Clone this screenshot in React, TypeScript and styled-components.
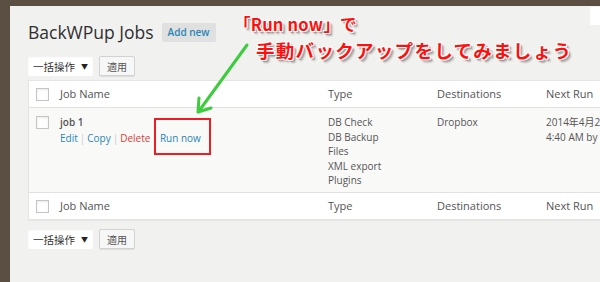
import React from "react";
import styled, { createGlobalStyle } from "styled-components";

const Global = createGlobalStyle`
  html, body { margin: 0; padding: 0; }
  body { width: 600px; height: 282px; overflow: hidden; background: #5b4f44; }
`;

const Frame = styled.div`
  position: relative;
  width: 600px;
  height: 282px;
  box-sizing: border-box;
  padding: 6px 0 0 10px;
  background: #5b4f44;
  overflow: hidden;
`;

const Page = styled.div`
  position: relative;
  height: 276px;
  background: #f1f1f0;
  padding: 16px 0 0 18px;
  box-sizing: border-box;
  overflow: hidden;
  font-family: "Open Sans", "Noto Sans CJK JP", sans-serif;
  color: #555;
`;

const ScreenTab = styled.div`
  position: absolute;
  top: 1px;
  right: 0;
  width: 10px;
  height: 18px;
  background: #fff;
`;

const TitleRow = styled.div`
  display: flex;
  align-items: center;
  gap: 8px;
  height: 20px;
  margin-bottom: 14px;
`;

const Title = styled.h2`
  margin: 0;
  font-size: 17.5px;
  font-weight: 400;
  color: #2f2f2f;
  line-height: 20px;
`;

const AddNew = styled.span`
  display: inline-flex;
  align-items: center;
  height: 19px;
  padding: 0 6px;
  background: #e0e0e0;
  border-radius: 2px;
  color: #2a86b5;
  font-size: 10px;
  font-weight: 600;
`;

const Bulk = styled.div<{ $bottom?: boolean }>`
  display: flex;
  gap: 6px;
  height: 20px;
  margin: ${(p) => (p.$bottom ? "9px 0 0" : "0 0 4px")};
`;

const Select = styled.div`
  display: flex;
  align-items: center;
  justify-content: space-between;
  width: 65px;
  box-sizing: border-box;
  padding: 0 5px 0 5px;
  background: #fff;
  font-size: 10.5px;
  color: #333;
  box-shadow: inset 0 1px 2px rgba(0, 0, 0, 0.07);
`;

const Caret = styled.span`
  font-size: 7px;
  color: #222;
`;

const Apply = styled.div`
  display: flex;
  align-items: center;
  justify-content: center;
  width: 36px;
  box-sizing: border-box;
  background: #f7f7f7;
  border: 1px solid #d2d2d2;
  border-radius: 2px;
  font-size: 10px;
  color: #555;
  box-shadow: 0 1px 0 #ddd;
`;

const Table = styled.div`
  width: 640px;
  background: #fff;
  border: 1px solid #e5e5e5;
  box-shadow: 0 1px 1px rgba(0, 0, 0, 0.04);
`;

const Row = styled.div<{ $body?: boolean }>`
  display: grid;
  grid-template-columns: 31px 268px 109px 109px 1fr;
  align-items: ${(p) => (p.$body ? "start" : "center")};
  height: ${(p) => (p.$body ? "86px" : "26px")};
  box-sizing: border-box;
  padding-top: ${(p) => (p.$body ? "7px" : "0")};
  background: ${(p) => (p.$body ? "#f9f9f8" : "#fff")};
  border-top: ${(p) => (p.$body ? "1px solid #e1e1e1" : "none")};
  border-bottom: ${(p) => (p.$body ? "1px solid #e1e1e1" : "none")};
  font-size: 10px;
  line-height: 14.5px;
`;

const Check = styled.span<{ $body?: boolean }>`
  display: block;
  width: 13px;
  height: 13px;
  margin: ${(p) => (p.$body ? "1px 0 0 7px" : "0 0 0 7px")};
  box-sizing: border-box;
  border: 1px solid #c4c4c4;
  background: #fefefe;
  box-shadow: inset 0 1px 2px rgba(0, 0, 0, 0.08);
`;

const HeadCell = styled.span`
  color: #555;
  font-size: 11px;
`;

const Cell = styled.div`
  display: flex;
  flex-direction: column;
  white-space: nowrap;
  color: #555;
`;

const JobName = styled.span`
  font-weight: 600;
  color: #555;
  margin-bottom: 1.5px;
`;

const Actions = styled.div`
  display: flex;
  align-items: center;
`;

const Link = styled.span<{ $danger?: boolean }>`
  color: ${(p) => (p.$danger ? "#dd3d36" : "#2a86b5")};
`;

const Sep = styled.span`
  color: #ccc;
  margin: 0 2px;
`;

const RedBox = styled.div`
  position: absolute;
  left: 144px;
  top: 112px;
  width: 57px;
  height: 37px;
  box-sizing: border-box;
  border: 2px solid #ee1c24;
`;

const Note = styled.div`
  position: absolute;
  font-family: "Noto Sans CJK JP", sans-serif;
  font-weight: 700;
  color: #ff1010;
  white-space: nowrap;
  text-shadow: -1px -1px 0 #fff, 1px -1px 0 #fff, -1px 1px 0 #fff, 1px 1px 0 #fff,
    2px 2px 1px #9a9a9a, 3px 3px 2px #b0b0b0;
`;

const Line1 = styled(Note)`
  left: 224px;
  top: 7px;
  font-size: 16.5px;
  line-height: 22px;
  letter-spacing: 0.2px;
`;

const Line2 = styled(Note)`
  left: 246px;
  top: 31px;
  font-size: 18.5px;
  line-height: 26px;
  letter-spacing: 1.3px;
`;

const Arrow = styled.svg`
  position: absolute;
  left: 0;
  top: 0;
  overflow: visible;
`;

const types = ["DB Check", "DB Backup", "Files", "XML export", "Plugins"];

function HeaderRow() {
  return (
    <Row>
      <Check />
      <HeadCell>Job Name</HeadCell>
      <HeadCell>Type</HeadCell>
      <HeadCell>Destinations</HeadCell>
      <HeadCell>Next Run</HeadCell>
    </Row>
  );
}

export default function App() {
  return (
    <>
      <Global />
      <Frame>
        <Page>
          <ScreenTab />
          <TitleRow>
            <Title>BackWPup Jobs</Title>
            <AddNew>Add new</AddNew>
          </TitleRow>
          <Bulk>
            <Select>
              一括操作 <Caret>▼</Caret>
            </Select>
            <Apply>適用</Apply>
          </Bulk>
          <Table>
            <HeaderRow />
            <Row $body>
              <Check $body />
              <Cell>
                <JobName>job 1</JobName>
                <Actions>
                  <Link>Edit</Link>
                  <Sep>|</Sep>
                  <Link>Copy</Link>
                  <Sep>|</Sep>
                  <Link $danger>Delete</Link>
                  <Sep>|</Sep>
                  <Link>Run now</Link>
                </Actions>
              </Cell>
              <Cell>
                {types.map((t) => (
                  <span key={t}>{t}</span>
                ))}
              </Cell>
              <Cell>
                <span>Dropbox</span>
              </Cell>
              <Cell>
                <span>2014年4月29日</span>
                <span>4:40 AM by WP-Cron</span>
              </Cell>
            </Row>
            <HeaderRow />
          </Table>
          <Bulk $bottom>
            <Select>
              一括操作 <Caret>▼</Caret>
            </Select>
            <Apply>適用</Apply>
          </Bulk>
          <RedBox />
          <Line1>「Run now」で</Line1>
          <Line2>手動バックアップをしてみましょう</Line2>
          <Arrow width="600" height="282">
            <g stroke="#3dcc3d" strokeWidth="3" strokeLinecap="round" fill="none" strokeLinejoin="round">
              <line x1="237" y1="39" x2="189" y2="105" />
              <polyline points="189,92 188,106 201,102" />
            </g>
          </Arrow>
        </Page>
      </Frame>
    </>
  );
}
